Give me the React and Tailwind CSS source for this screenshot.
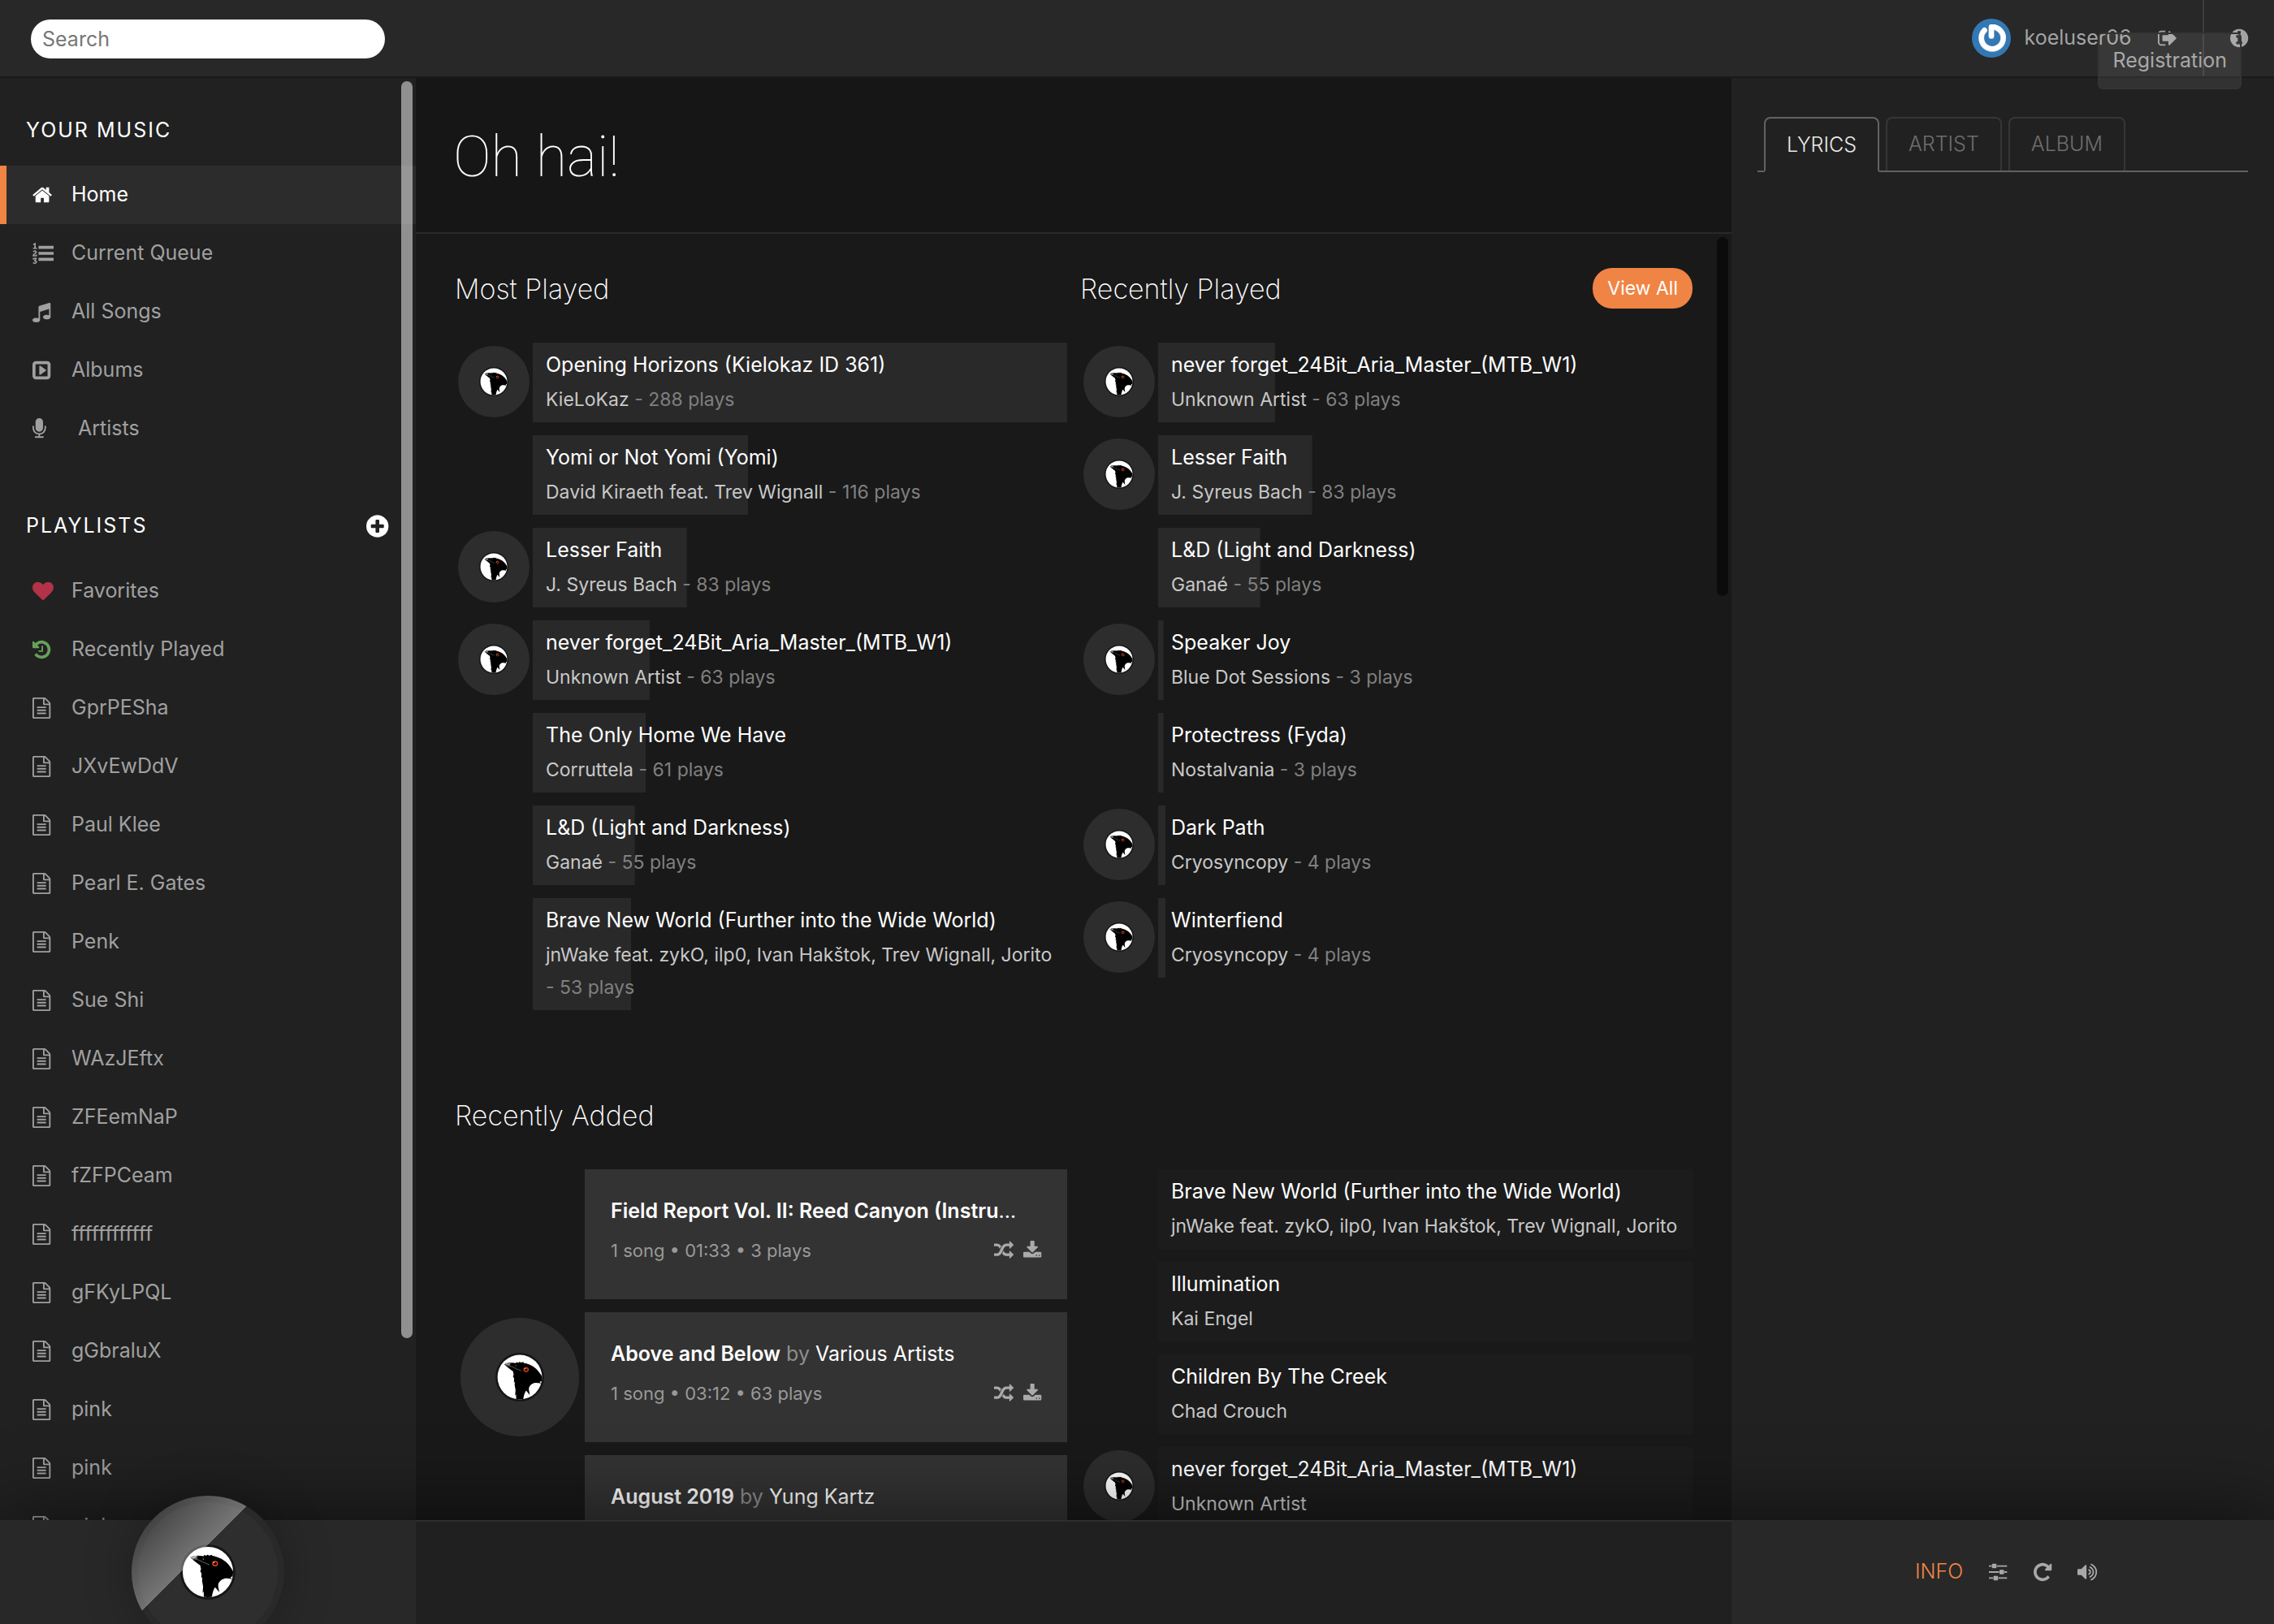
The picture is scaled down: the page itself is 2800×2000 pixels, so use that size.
import React from "react";

const ICONS = {
  home: [64, 1664, "M1472 992v480q0 26-19 45t-45 19h-384v-384h-256v384h-384q-26 0-45-19t-19-45v-480q0-1 .5-3t.5-3l575-474 575 474q1 2 1 6zm223-69l-62 74q-8 9-21 11h-3q-13 0-21-7l-692-577-692 577q-12 8-24 7-13-2-21-11l-62-74q-8-10-7-23.5t11-21.5l719-599q32-26 76-26t76 26l244 204v-195q0-14 9-23t23-9h192q14 0 23 9t9 23v408l219 182q10 8 11 21.5t-7 23.5z"],
  listOl: [0, 1792, "M381 1620q0 80-54.5 126t-135.5 46q-106 0-172-66l57-88q49 45 106 45 29 0 50.5-14.5t21.5-42.5q0-64-105-56l-26-56q8-10 32.5-43.5t42.5-54 37-38.5v-1q-16 0-48.5 1t-48.5 1v53h-106v-152h333v88l-95 115q51 12 81 49t30 88zm2-627v159h-362q-6-36-6-54 0-51 23.5-93t56.5-68 66-47.5 56.5-43.5 23.5-45q0-25-14.5-38.5t-39.5-13.5q-46 0-81 58l-85-59q24-51 71.5-79.5t105.5-28.5q73 0 123 41.5t50 112.5q0 50-34 91.5t-75 64.5-75.5 50.5-35.5 52.5h127v-60h105zm1409 319v192q0 13-9.5 22.5t-22.5 9.5h-1216q-13 0-22.5-9.5t-9.5-22.5v-192q0-14 9-23t23-9h1216q13 0 22.5 9.5t9.5 22.5zm-1408-899v99h-335v-99h107q0-41 .5-121.5t.5-121.5v-12h-2q-8 17-50 54l-71-76 136-127h106v404h108zm1408 387v192q0 13-9.5 22.5t-22.5 9.5h-1216q-13 0-22.5-9.5t-9.5-22.5v-192q0-14 9-23t23-9h1216q13 0 22.5 9.5t9.5 22.5zm0-512v192q0 13-9.5 22.5t-22.5 9.5h-1216q-13 0-22.5-9.5t-9.5-22.5v-192q0-13 9.5-22.5t22.5-9.5h1216q13 0 22.5 9.5t9.5 22.5z"],
  music: [128, 1536, "M1664 224v1120q0 50-34 89t-86 60.5-103.5 32-96.5 10.5-96.5-10.5-103.5-32-86-60.5-34-89 34-89 86-60.5 103.5-32 96.5-10.5q105 0 192 39v-537l-768 237v709q0 50-34 89t-86 60.5-103.5 32-96.5 10.5-96.5-10.5-103.5-32-86-60.5-34-89 34-89 86-60.5 103.5-32 96.5-10.5q105 0 192 39v-967q0-31 19-56.5t49-35.5l832-256q12-4 28-4 40 0 68 28t28 68z"],
  album: [128, 1536, "M1280 896q0 33-27 52l-448 320q-31 23-66 5-35-17-35-57v-640q0-40 35-57 35-18 66 5l448 320q27 19 27 52zM1664 416v960q0 119-84.5 203.5t-203.5 84.5h-960q-119 0-203.5-84.5t-84.5-203.5v-960q0-119 84.5-203.5t203.5-84.5h960q119 0 203.5 84.5t84.5 203.5zM1408 1376v-960q0-14-9-23t-23-9h-960q-14 0-23 9t-9 23v960q0 14 9 23t23 9h960q14 0 23-9t9-23z"],
  mic: [320, 1152, "M1472 704v128q0 221-147.5 384.5t-364.5 187.5v132h256q26 0 45 19t19 45-19 45-45 19h-640q-26 0-45-19t-19-45 19-45 45-19h256v-132q-217-24-364.5-187.5t-147.5-384.5v-128q0-26 19-45t45-19 45 19 19 45v128q0 185 131.5 316.5t316.5 131.5 316.5-131.5 131.5-316.5v-128q0-26 19-45t45-19 45 19 19 45zm-256-384v512q0 132-94 226t-226 94-226-94-94-226v-512q0-132 94-226t226-94 226 94 94 226z"],
  heart: [0, 1792, "M896 1664q-26 0-44-18l-624-602q-10-8-27.5-26t-55.5-65.5-68-97.5-53.5-121-23.5-138q0-220 127-344t351-124q62 0 126.5 21.5t120 58 95.5 68.5 76 68q36-36 76-68t95.5-68.5 120-58 126.5-21.5q224 0 351 124t127 344q0 221-229 450l-623 600q-18 18-44 18z"],
  history: [128, 1536, "M1664 896q0 156-61 298t-164 245-245 164-298 61q-172 0-327-72.5t-264-204.5q-7-10-6.5-22.5t8.5-20.5l137-138q10-9 25-9 16 2 23 12 73 95 179 147t225 52q104 0 198.5-40.5t163.5-109.5 109.5-163.5 40.5-198.5-40.5-198.5-109.5-163.5-163.5-109.5-198.5-40.5q-98 0-188 35.5t-160 101.5l137 138q31 30 14 69-17 40-59 40h-448q-26 0-45-19t-19-45v-448q0-42 40-59 39-17 69 14l130 129q107-101 244.5-156.5t284.5-55.5q156 0 298 61t245 164 164 245 61 298zm-640-288v448q0 14-9 23t-23 9h-320q-14 0-23-9t-9-23v-64q0-14 9-23t23-9h224v-352q0-14 9-23t23-9h64q14 0 23 9t9 23z"],
  file: [128, 1536, "M1596 380q28 28 48 76t20 88v1152q0 40-28 68t-68 28h-1344q-40 0-68-28t-28-68v-1600q0-40 28-68t68-28h896q40 0 88 20t76 48zm-444-244v376h376q-10-29-22-41l-313-313q-12-12-41-22zm384 1528v-1024h-416q-40 0-68-28t-28-68v-416h-768v1536h1280zm-1024-864q0-14 9-23t23-9h704q14 0 23 9t9 23v64q0 14-9 23t-23 9h-704q-14 0-23-9t-9-23v-64zm736 224q14 0 23 9t9 23v64q0 14-9 23t-23 9h-704q-14 0-23-9t-9-23v-64q0-14 9-23t23-9h704zm0 256q14 0 23 9t9 23v64q0 14-9 23t-23 9h-704q-14 0-23-9t-9-23v-64q0-14 9-23t23-9h704z"],
  plus: [128, 1536, "M1344 960v-128q0-26-19-45t-45-19h-256v-256q0-26-19-45t-45-19h-128q-26 0-45 19t-19 45v256h-256q-26 0-45 19t-19 45v128q0 26 19 45t45 19h256v256q0 26 19 45t45 19h128q26 0 45-19t19-45v-256h256q26 0 45-19t19-45zm320-64q0 209-103 385.5t-279.5 279.5-385.5 103-385.5-103-279.5-279.5-103-385.5 103-385.5 279.5-279.5 385.5-103 385.5 103 279.5 279.5 103 385.5z"],
  info: [128, 1536, "M1152 1376v-160q0-14-9-23t-23-9h-96v-512q0-14-9-23t-23-9h-320q-14 0-23 9t-9 23v160q0 14 9 23t23 9h96v320h-96q-14 0-23 9t-9 23v160q0 14 9 23t23 9h448q14 0 23-9t9-23zm-128-896v-160q0-14-9-23t-23-9h-192q-14 0-23 9t-9 23v160q0 14 9 23t23 9h192q14 0 23-9t9-23zm640 416q0 209-103 385.5t-279.5 279.5-385.5 103-385.5-103-279.5-279.5-103-385.5 103-385.5 279.5-279.5 385.5-103 385.5 103 279.5 279.5 103 385.5z"],
  signOut: [64, 1600, "M704 1440q0 4 1 20t.5 26.5-3 23.5-10 19.5-20.5 6.5h-320q-119 0-203.5-84.5t-84.5-203.5v-704q0-119 84.5-203.5t203.5-84.5h320q13 0 22.5 9.5t9.5 22.5q0 4 1 20t.5 26.5-3 23.5-10 19.5-20.5 6.5h-320q-66 0-113 47t-47 113v704q0 66 47 113t113 47h312l11.5 1 11.5 3 8 5.5 7 9 2 13.5zm928-544q0 26-19 45l-544 544q-19 19-45 19t-45-19-19-45v-288h-448q-26 0-45-19t-19-45v-384q0-26 19-45t45-19h448v-288q0-26 19-45t45-19 45 19l544 544q19 19 19 45z"],
  random: [0, 1792, "M666 481q-60 92-137 273-22-45-37-72.5t-40.5-63.5-51-56.5-63-35-81.5-14.5h-224q-14 0-23-9t-9-23v-192q0-14 9-23t23-9h224q250 0 410 225zm1126 799q0 14-9 23l-320 320q-9 9-23 9-13 0-22.5-9.5t-9.5-22.5v-192q-32 0-85 .5t-81 1-73-1-71-5-64-10.5-63-18.5-58-28.5-59-40-55-53.5-56-69.5q59-93 136-273 22 45 37 72.5t40.5 63.5 51 56.5 63 35 81.5 14.5h256v-192q0-14 9-23t23-9q12 0 24 10l319 319q9 9 9 23zm0-896q0 14-9 23l-320 320q-9 9-23 9-13 0-22.5-9.5t-9.5-22.5v-192h-256q-48 0-87 15t-69 45-51 61.5-45 77.5q-32 62-78 171-29 66-49.5 111t-54 105-64 100-74 83-90 68.5-106.5 42-128 16.5h-224q-14 0-23-9t-9-23v-192q0-14 9-23t23-9h224q48 0 87-15t69-45 51-61.5 45-77.5q32-62 78-171 29-66 49.5-111t54-105 64-100 74-83 90-68.5 106.5-42 128-16.5h256v-192q0-14 9-23t23-9q12 0 24 10l319 319q9 9 9 23z"],
  download: [64, 1664, "M1344 1344q0-26-19-45t-45-19-45 19-19 45 19 45 45 19 45-19 19-45zm256 0q0-26-19-45t-45-19-45 19-19 45 19 45 45 19 45-19 19-45zm128-224v320q0 40-28 68t-68 28h-1472q-40 0-68-28t-28-68v-320q0-40 28-68t68-28h465l135 136q58 56 136 56t136-56l136-136h464q40 0 68 28t28 68zm-325-569q17 41-14 70l-448 448q-18 19-45 19t-45-19l-448-448q-31-29-14-70 17-39 59-39h256v-448q0-26 19-45t45-19h256q26 0 45 19t19 45v448h256q42 0 59 39z"],
  sliders: [0, 1536, "M352 1344v128h-352v-128h352zm352-128q26 0 45 19t19 45v256q0 26-19 45t-45 19h-256q-26 0-45-19t-19-45v-256q0-26 19-45t45-19h256zm160-384v128h-864v-128h864zm-640-512v128h-224v-128h224zm1312 1024v128h-736v-128h736zm-960-1152q26 0 45 19t19 45v256q0 26-19 45t-45 19h-256q-26 0-45-19t-19-45v-256q0-26 19-45t45-19h256zm640 512q26 0 45 19t19 45v256q0 26-19 45t-45 19h-256q-26 0-45-19t-19-45v-256q0-26 19-45t45-19h256zm320 128v128h-224v-128h224zm0-512v128h-864v-128h864z"],
  repeat: [128, 1536, "M1664 256v448q0 26-19 45t-45 19h-448q-42 0-59-40-17-39 14-69l138-138q-148-137-349-137-104 0-198.5 40.5t-163.5 109.5-109.5 163.5-40.5 198.5 40.5 198.5 109.5 163.5 163.5 109.5 198.5 40.5q119 0 225-52t179-147q7-10 23-12 15 0 25 9l137 138q9 8 9.5 20.5t-7.5 22.5q-109 132-264 204.5t-327 72.5q-156 0-298-61t-245-164-164-245-61-298 61-298 164-245 245-164 298-61q147 0 284.5 55.5t244.5 156.5l130-129q29-31 70-14 39 17 39 59z"],
  volume: [64, 1664, "M832 352v1088q0 26-19 45t-45 19-45-19l-333-333h-262q-26 0-45-19t-19-45v-384q0-26 19-45t45-19h262l333-333q19-19 45-19t45 19 19 45zm384 544q0 76-42.5 141.5t-112.5 93.5q-10 5-25 5-26 0-45-18.5t-19-45.5q0-21 12-35.5t29-25 34-23 29-36 12-56.5-12-56.5-29-36-34-23-29-25-12-35.5q0-27 19-45.5t45-18.5q15 0 25 5 70 27 112.5 93t42.5 142zm256 0q0 153-85 282.5t-225 188.5q-13 5-25 5-27 0-46-19t-19-45q0-39 39-59 56-29 76-44 74-54 115.5-135.5t41.5-173.5-41.5-173.5-115.5-135.5q-20-15-76-44-39-20-39-59 0-26 19-45t45-19q13 0 26 5 140 59 225 188.5t85 282.5zm256 0q0 230-127 422.5t-338 283.5q-13 5-26 5-26 0-45-19t-19-45q0-36 39-59 7-4 22.5-10.5t22.5-10.5q46-25 82-51 123-91 192-227t69-289-69-289-192-227q-36-26-82-51-7-4-22.5-10.5t-22.5-10.5q-39-23-39-59 0-26 19-45t45-19q13 0 26 5 211 91 338 283.5t127 422.5z"],
};

function Icon({ name, className = "h-[26px]" }) {
  const [x, width, path] = ICONS[name];
  return (
    <svg viewBox={`${x} 0 ${width} 1792`} className={`w-auto shrink-0 overflow-visible ${className}`} fill="currentColor" fillRule="evenodd" aria-hidden="true">
      <path d={path} />
    </svg>
  );
}

function Crow({ className }) {
  return (
    <svg viewBox="63 63 208 208" className={className} aria-hidden="true">
      <defs>
        <clipPath id="hub">
          <circle cx="167" cy="167" r="95" />
        </clipPath>
      </defs>
      <circle cx="167" cy="167" r="104" fill="#161616" />
      <circle cx="167" cy="167" r="95" fill="#fff" />
      <g clipPath="url(#hub)">
        <path
          d="M101 112C110 105 126 104 150 107L155 102L159 106L167 101L170 105L184 102L182 106C200 108 222 117 238 132C250 144 258 156 266 172L264 186L257 184L252 188L258 194C246 191 236 190 228 192C216 195 208 204 206 214C205 224 209 234 210 243L194 224C187 234 183 248 181 270H152L151 240L147 246L149 222L145 200L146 186L142 190L143 172L138 164L141 156L138 142C128 135 116 126 101 112Z"
          fill="#000"
        />
        <path d="M101 112C110 105 122 105 131 108C125 110 123 113 127 118L112 116Z" fill="#8c8c8c" />
        <path d="M110 117C130 119 140 125 152 131L173 140" fill="none" stroke="#9a9a9a" strokeWidth="2" />
        <circle cx="150" cy="118" r="2" fill="#bbb" />
        <ellipse cx="194" cy="135" rx="9" ry="8" fill="#200" stroke="#e0421f" strokeWidth="4.5" />
        <circle cx="190" cy="131" r="2.5" fill="#ffd9cc" />
      </g>
    </svg>
  );
}

function Disc({ size, hub }) {
  return (
    <div className={`flex items-center justify-center rounded-full bg-[#2d2d2d] ${size}`}>
      <Crow className={hub} />
    </div>
  );
}

const MUSIC = [
  ["home", "Home"],
  ["listOl", "Current Queue"],
  ["music", "All Songs"],
  ["album", "Albums"],
  ["mic", "Artists"],
];

const PLAYLISTS = ["GprPESha", "JXvEwDdV", "Paul Klee", "Pearl E. Gates", "Penk", "Sue Shi", "WAzJEftx", "ZFEemNaP", "fZFPCeam", "ffffffffffff", "gFKyLPQL", "gGbraluX", "pink", "pink", "pink"];

const MOST_PLAYED = [
  ["Opening Horizons (Kielokaz ID 361)", "KieLoKaz", 288, true],
  ["Yomi or Not Yomi (Yomi)", "David Kiraeth feat. Trev Wignall", 116, false],
  ["Lesser Faith", "J. Syreus Bach", 83, true],
  ["never forget_24Bit_Aria_Master_(MTB_W1)", "Unknown Artist", 63, true],
  ["The Only Home We Have", "Corruttela", 61, false],
  ["L&D (Light and Darkness)", "Ganaé", 55, false],
  ["Brave New World (Further into the Wide World)", "jnWake feat. zykO, ilp0, Ivan Hakštok, Trev Wignall, Jorito", 53, false],
];

const RECENTLY_PLAYED = [
  ["never forget_24Bit_Aria_Master_(MTB_W1)", "Unknown Artist", 63, true],
  ["Lesser Faith", "J. Syreus Bach", 83, true],
  ["L&D (Light and Darkness)", "Ganaé", 55, false],
  ["Speaker Joy", "Blue Dot Sessions", 3, true],
  ["Protectress (Fyda)", "Nostalvania", 3, false],
  ["Dark Path", "Cryosyncopy", 4, true],
  ["Winterfiend", "Cryosyncopy", 4, true],
];

const ADDED_SONGS = [
  ["Brave New World (Further into the Wide World)", "jnWake feat. zykO, ilp0, Ivan Hakštok, Trev Wignall, Jorito", null, false],
  ["Illumination", "Kai Engel", null, false],
  ["Children By The Creek", "Chad Crouch", null, false],
  ["never forget_24Bit_Aria_Master_(MTB_W1)", "Unknown Artist", null, true],
];

const ADDED_ALBUMS = [
  ["Field Report Vol. II: Reed Canyon (Instrumentals)", "", "1 song • 01:33 • 3 plays", false],
  ["Above and Below", "Various Artists", "1 song • 03:12 • 63 plays", true],
  ["August 2019", "Yung Kartz", "", false],
];

function NavItem({ icon, label, active, iconColor = "" }) {
  return (
    <li>
      <a
        href="#"
        className={`flex h-[72px] items-center border-l-8 pl-8 ${active ? "border-[#f08444] bg-[#2c2c2c] text-white" : "border-transparent text-[#a0a0a0]"}`}
      >
        <span className={`flex w-12 shrink-0 items-center ${iconColor}`}>
          <Icon name={icon} />
        </span>
        <span className={icon === "mic" ? "pl-2" : ""}>{label}</span>
      </a>
    </li>
  );
}

function SongRow({ song }) {
  const [title, artist, plays, cover] = song;
  const share = plays === null ? 0 : plays === 3 ? 1 : (plays / 288) * 100;
  return (
    <li className="flex">
      <div className="flex h-24 w-24 shrink-0 items-center justify-center">
        {cover && <Disc size="h-[88px] w-[88px]" hub="h-9 w-9" />}
      </div>
      <div
        className={`min-w-0 flex-1 px-4 py-2 ${plays === null ? "bg-[#1c1c1c]" : "bg-linear-to-r from-[#292929] to-[#292929] bg-no-repeat"}`}
        style={plays === null ? undefined : { backgroundSize: `${share}% 100%` }}
      >
        <div className="truncate leading-[38px] text-white">{title}</div>
        <div className="mt-1 text-[23px] leading-[40px]">
          <a href="#" className="text-[#c8c8c8]">{artist}</a>
          {plays !== null && <span className="text-[#808080]"> <span className="whitespace-nowrap">- {plays} plays</span></span>}
        </div>
      </div>
    </li>
  );
}

function AlbumCard({ album }) {
  const [title, artist, meta, cover] = album;
  return (
    <li className="flex">
      <div className="flex h-40 w-40 shrink-0 items-center justify-center">
        {cover && <Disc size="h-[146px] w-[146px]" hub="h-[60px] w-[60px]" />}
      </div>
      <div className="h-40 min-w-0 flex-1 bg-[#333] px-8 pt-8">
        <div className="truncate pr-5 leading-[38px] text-white">
          <a href="#" className="font-semibold">{title}</a>
          {artist && <> <span className="text-[#8f8f8f]">by</span> <a href="#">{artist}</a></>}
        </div>
        {meta && (
          <div className="mt-[11px] flex items-center gap-3 text-[22px] leading-[38px] text-[#999]">
            <span className="flex-1">{meta}</span>
            <button aria-label="Shuffle" className="text-[#aaa]"><Icon name="random" className="h-6" /></button>
            <button aria-label="Download" className="text-[#aaa]"><Icon name="download" className="h-6" /></button>
          </div>
        )}
      </div>
    </li>
  );
}

function SectionTitle({ children, action }) {
  return (
    <div className="mb-[42px] flex h-[50px] items-center justify-between">
      <h2 className="text-[34px] font-extralight text-white">{children}</h2>
      {action}
    </div>
  );
}

function Header() {
  return (
    <header className="flex h-24 shrink-0 items-stretch justify-between border-b-2 border-[#191919] bg-[#282828] text-[#a3a3a3]">
      <div className="flex items-center pt-[2px] pl-[38px]">
        <input
          type="search"
          aria-label="Search"
          placeholder="Search"
          className="h-12 w-[436px] rounded-3xl bg-white px-[14px] text-black placeholder:text-[#777]"
        />
      </div>
      <div className="relative flex">
        <div className="flex items-center pr-8">
          <a href="#" className="flex items-center gap-4">
            <svg viewBox="0 0 48 48" className="h-12 w-12" aria-hidden="true">
              <circle cx="24" cy="24" r="24" fill="#3378b4" />
              <path d="M15.5 14.5A13.5 13.5 0 1 0 24 10.5V21.5" fill="none" stroke="#c9d3dc" strokeWidth="7" strokeLinecap="round" strokeLinejoin="round" />
              <path d="M15.5 14A13.5 13.5 0 1 0 24 10V21" fill="none" stroke="#fff" strokeWidth="6" strokeLinecap="round" strokeLinejoin="round" />
            </svg>
            koeluser06
          </a>
          <a href="#" aria-label="Log out" className="ml-8"><Icon name="signOut" /></a>
        </div>
        <div className="flex items-center border-l-2 border-[#3c3c3c] pr-8 pl-8">
          <button aria-label="About"><Icon name="info" /></button>
        </div>
        <div role="tooltip" className="absolute top-10 right-10 z-20 flex h-[70px] items-center rounded-md border-2 border-[#343434] bg-white/8 px-4 text-[#a8a8a8]">
          Registration
        </div>
      </div>
    </header>
  );
}

function Sidebar() {
  return (
    <nav className="relative w-[512px] shrink-0 overflow-hidden bg-[#212121] pt-[46px]">
      <h2 className="mb-[26px] px-8 leading-9 tracking-[2px] text-white">YOUR MUSIC</h2>
      <ul>
        {MUSIC.map(([icon, label]) => (
          <NavItem key={label} icon={icon} label={label} active={label === "Home"} />
        ))}
      </ul>
      <div className="mt-[66px] mb-[26px] flex h-9 items-center justify-between pr-[34px] pl-8">
        <h2 className="tracking-[2px] text-white">PLAYLISTS</h2>
        <button aria-label="New playlist" className="text-white"><Icon name="plus" className="h-8" /></button>
      </div>
      <ul>
        <NavItem icon="heart" label="Favorites" iconColor="text-[#b23348]" />
        <NavItem icon="history" label="Recently Played" iconColor="text-[#68a05a]" />
        {PLAYLISTS.map((name, i) => (
          <NavItem key={i} icon="file" label={name} />
        ))}
      </ul>
      <div className="absolute top-1 right-1 h-[1548px] w-[14px] rounded-full bg-white/50" />
    </nav>
  );
}

function Main() {
  return (
    <main className="flex min-w-0 flex-1 flex-col bg-[#191919]">
      <h1 className="flex h-48 shrink-0 items-center border-b-2 border-[#292929] bg-[#161616] px-[46px] pt-1 font-['Roboto'] text-[70px] font-thin text-white">Oh hai!</h1>
      <div className="relative min-h-0 flex-1 overflow-hidden px-12 pt-[42px]">
        <section className="grid grid-cols-2 gap-4">
          <div>
            <SectionTitle>Most Played</SectionTitle>
            <ol className="flex flex-col gap-4">
              {MOST_PLAYED.map((song) => <SongRow key={song[0]} song={song} />)}
            </ol>
          </div>
          <div>
            <SectionTitle action={<button className="h-[50px] rounded-3xl bg-[#f08444] px-[18px] text-[23px] text-white">View All</button>}>
              Recently Played
            </SectionTitle>
            <ol className="flex flex-col gap-4">
              {RECENTLY_PLAYED.map((song) => <SongRow key={song[0]} song={song} />)}
            </ol>
          </div>
        </section>
        <section className="mt-[104px]">
          <SectionTitle>Recently Added</SectionTitle>
          <div className="grid grid-cols-2 gap-4">
            <ol className="flex flex-col gap-4">
              {ADDED_ALBUMS.map((album) => <AlbumCard key={album[0]} album={album} />)}
            </ol>
            <ol className="flex flex-col gap-4">
              {ADDED_SONGS.map((song) => <SongRow key={song[0]} song={song} />)}
            </ol>
          </div>
        </section>
        <div className="absolute top-1 right-1 h-[442px] w-[14px] rounded-full bg-[#0b0b0b]" />
      </div>
    </main>
  );
}

function ExtraPanel() {
  const idle = "h-[66px] rounded-t-lg border-2 border-b-0 border-[#363636] px-[26px] text-[#6e6e6e]";
  return (
    <aside className="w-[668px] shrink-0 bg-[#212121] px-8 pt-12">
      <div role="tablist" className="flex items-start gap-2 border-b-2 border-[#626262] pl-2 font-light">
        <button role="tab" aria-selected="true" className="-mb-[2px] h-[68px] rounded-t-lg border-2 border-[#626262] border-b-[#212121] px-[26px] pt-[2px] text-[#e8e8e8]">LYRICS</button>
        <button role="tab" aria-selected="false" className={idle}>ARTIST</button>
        <button role="tab" aria-selected="false" className={idle}>ALBUM</button>
      </div>
    </aside>
  );
}

function Footer() {
  return (
    <footer className="relative z-10 flex h-32 shrink-0 bg-[#282828] shadow-[0_0_100px_rgba(0,0,0,0.6)]">
      <div className="relative w-[512px] shrink-0">
        <div className="absolute -top-[30px] left-[162px] flex h-[188px] w-[188px] items-center justify-center rounded-full border-8 border-[#292929] bg-[#2e2e2e] shadow-[0_0_60px_rgba(0,0,0,0.25)]">
          <Crow className="h-[68px] w-[68px]" />
          <div className="absolute -inset-2 rounded-full bg-[linear-gradient(135deg,rgba(255,255,255,0)_0%,rgba(255,255,255,0.34)_41%,transparent_41%)]" />
        </div>
      </div>
      <div className="flex-1 border-t-2 border-[#2e2e2e] bg-[#202020]" />
      <div className="flex w-[668px] shrink-0 items-center pl-[226px] text-[#a8a8a8]">
        <button className="mr-8 font-light text-[#f08444]">INFO</button>
        <button aria-label="Equalizer" className="mr-8"><Icon name="sliders" /></button>
        <button aria-label="Repeat" className="mr-8"><Icon name="repeat" /></button>
        <button aria-label="Mute"><Icon name="volume" /></button>
      </div>
    </footer>
  );
}

export default function App() {
  return (
    <div className="flex h-screen flex-col overflow-hidden bg-[#191919] font-['Inter',sans-serif] text-[25px]">
      <Header />
      <div className="flex min-h-0 flex-1">
        <Sidebar />
        <Main />
        <ExtraPanel />
      </div>
      <Footer />
    </div>
  );
}
